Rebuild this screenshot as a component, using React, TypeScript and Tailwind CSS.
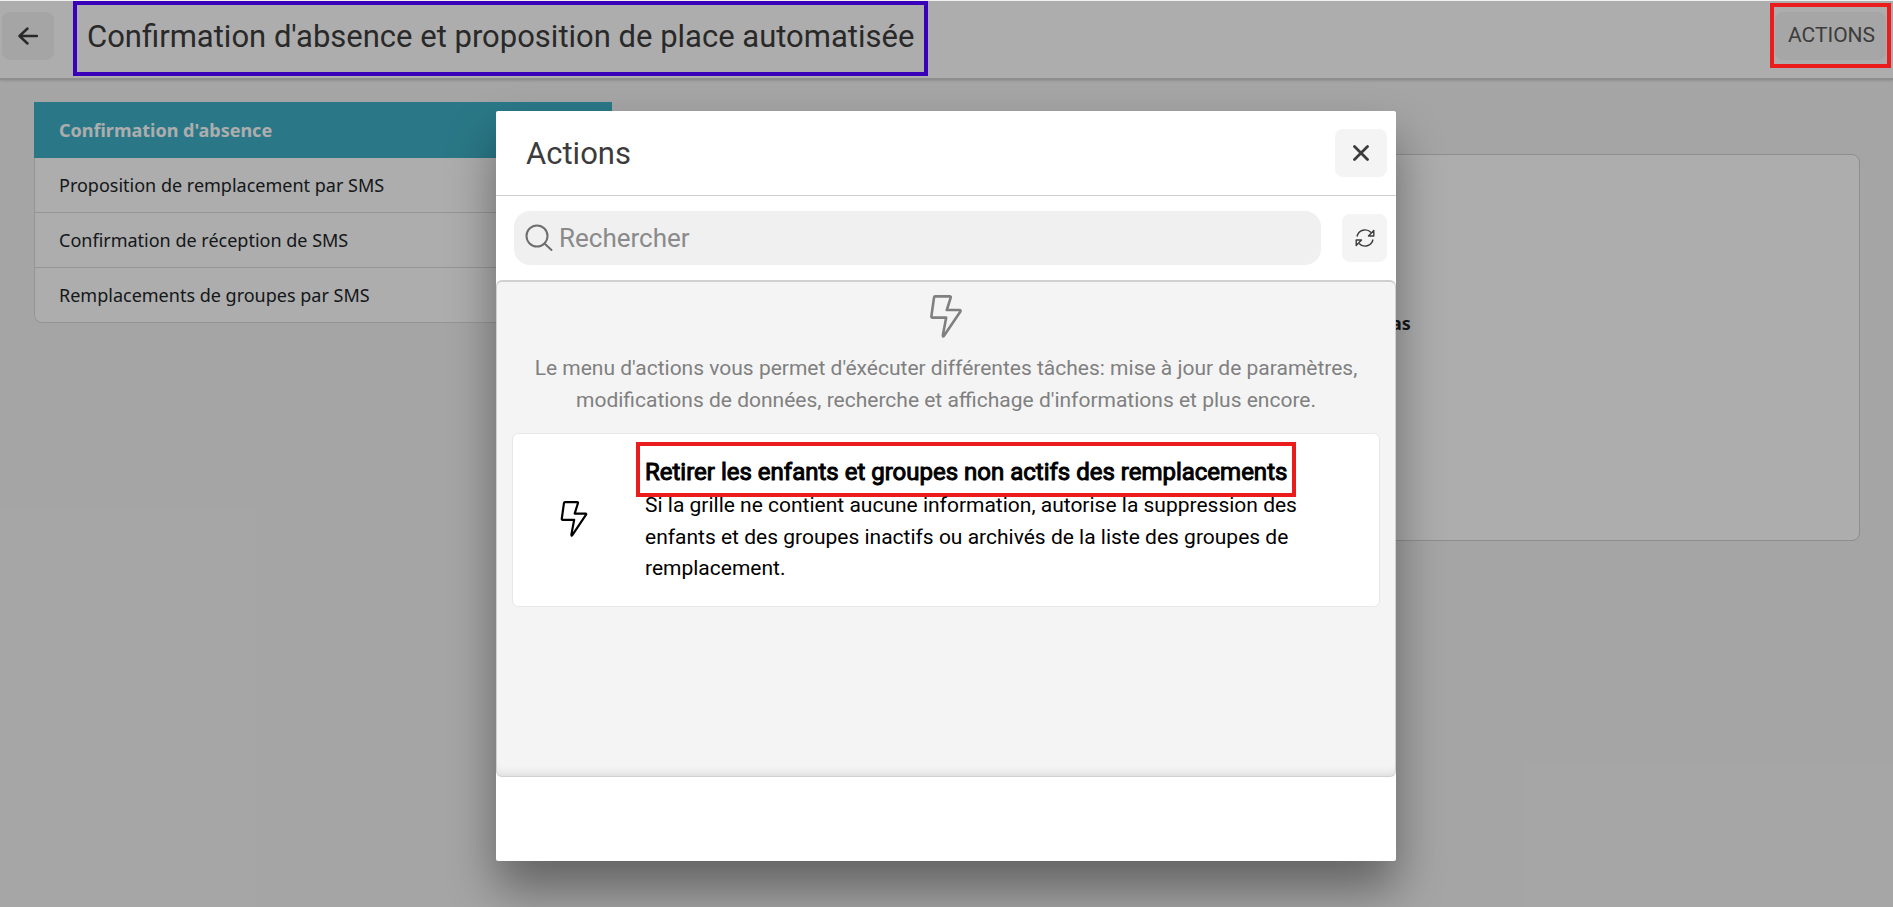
import React, { useState } from 'react';

const tabs = [
    "Confirmation d'absence",
    'Proposition de remplacement par SMS',
    'Confirmation de réception de SMS',
    'Remplacements de groupes par SMS',
];

const BoltIcon: React.FC<{ className?: string }> = ({ className }) => (
    <svg viewBox="0 0 32 43" className={className} fill="none" stroke="currentColor" strokeWidth="2.6" strokeLinecap="round" strokeLinejoin="round" aria-hidden="true">
        <path d="M5.2 1.4h14.500q1.400 0 1 1.300L16.800 15h13q1.200.2.600 1.400L14.200 40.500q-1.500 2.200-1.300-.6L16.200 22.600H2.500q-1.200 0-1.100-1.400L4 2.600q.2-1.200 1.200-1.200z" />
    </svg>
);

const SearchIcon: React.FC = () => (
    <svg viewBox="0 0 28 28" className="size-7 shrink-0 text-[#6e6e6e]" fill="none" stroke="currentColor" strokeWidth="2" strokeLinecap="round" aria-hidden="true">
        <circle cx="12" cy="12" r="10.5" />
        <path d="M19.500 19.500l7 6.500" />
    </svg>
);

const RefreshIcon: React.FC = () => (
    <svg viewBox="0 0 20 20" className="size-5" fill="none" stroke="currentColor" strokeWidth="1.4" strokeLinejoin="round" aria-hidden="true">
        <path d="M2 8.500A8.200 8.200 0 0 1 16 4.500" />
        <path d="M18 11.500A8.200 8.200 0 0 1 4 15.500" />
        <path d="M18.800 2.500v5.500h-5.300z" />
        <path d="M1.200 17.500V12h5.300z" />
    </svg>
);

const App: React.FC = () => {
    const [activeTab, setActiveTab] = useState(0);
    const [search, setSearch] = useState('');

    return (
        <div className="relative min-h-screen overflow-hidden bg-[#f4f4f4] pt-px font-['Roboto',sans-serif]">
            <header className="flex h-[79px] items-start border-b-2 border-[#d2d2d2] bg-white pl-0.5 shadow-sm">
                <button aria-label="Retour" className="mt-[11px] flex h-12 w-[52px] items-center justify-center rounded-lg bg-[#f4f4f4] text-[#3c3c3c]">
                    <svg viewBox="0 0 20 18" className="h-[18px] w-5" fill="none" stroke="currentColor" strokeWidth="2.4" strokeLinecap="round" strokeLinejoin="round" aria-hidden="true">
                        <path d="M9.500 1.500L1.500 9l8 7.500M2 9h17" />
                    </svg>
                </button>
            </header>

            <main className="flex items-start gap-[34px] px-[33px] pt-[22px] pl-[34px]">
                <nav className="w-[578px] shrink-0 font-['Noto_Sans',sans-serif] text-lg">
                    {tabs.map((tab, i) => (
                        <button
                            key={tab}
                            onClick={() => setActiveTab(i)}
                            className={i === activeTab
                                ? 'block h-14 w-full bg-[#3eb1c8] pl-[25px] text-left font-bold text-white'
                                : 'block h-[55px] w-full border-x border-b border-[#dcdcdc] bg-white pl-6 text-left text-[#212529] last:rounded-b-lg'}
                        >
                            {tab}
                        </button>
                    ))}
                </nav>
                <section className="mt-[52px] h-[387px] grow rounded-lg border border-[#d2d2d2] bg-white pt-[154px] pl-[744px] font-['Noto_Sans',sans-serif] text-lg font-bold text-[#212529]">
                    as
                </section>
            </main>

            <div className="absolute inset-x-0 top-px bottom-0 bg-black/32" />

            {/* highlighted title and button, above the backdrop */}
            <div className="absolute inset-x-0 top-px flex items-start justify-between pr-0.5 pl-[73px]">
                <h1 className="flex h-[75px] items-center border-4 border-[#3a00b9] px-2.5 pb-0.5 text-[31px] text-[#292929]">
                    Confirmation d'absence et proposition de place automatisée
                </h1>
                <div className="mt-0.5 flex h-[65px] w-[121px] border-4 border-[#ea1c1c] p-px pt-[5px]">
                    <button className="h-12 w-full rounded-lg bg-[#a6a6a6] pl-0.5 text-[21px] text-[#3c3c3c]">ACTIONS</button>
                </div>
            </div>

            <div className="absolute inset-x-0 top-[111px] flex justify-center pr-px">
                <div role="dialog" aria-labelledby="dialog-title" className="flex h-[750px] w-[900px] flex-col rounded-xs bg-white shadow-[0_28px_48px_rgba(0,0,0,0.4)]">
                    <div className="flex h-[85px] items-center justify-between border-b border-[#cfcfcf] pr-[9px] pl-[30px]">
                        <h2 id="dialog-title" className="pt-0.5 text-[31px] text-[#3c3c3c]">Actions</h2>
                        <button aria-label="Fermer" className="flex h-12 w-[52px] items-center justify-center rounded-lg bg-[#f4f4f4] text-[#3c3c3c]">
                            <svg viewBox="0 0 16 16" className="size-4" fill="none" stroke="currentColor" strokeWidth="2.8" strokeLinecap="round" aria-hidden="true">
                                <path d="M1.500 1.500l13 13M14.500 1.500l-13 13" />
                            </svg>
                        </button>
                    </div>

                    <div className="flex h-[84px] items-center gap-[21px] pr-[9px] pl-[18px]">
                        <label className="flex h-[54px] grow items-center gap-1.5 rounded-2xl bg-[#f0f0f0] pl-[11px]">
                            <SearchIcon />
                            <input
                                type="text"
                                aria-label="Rechercher"
                                placeholder="Rechercher"
                                value={search}
                                onChange={(e) => setSearch(e.target.value)}
                                className="w-full bg-transparent text-[26px] outline-none placeholder:text-[#8a8a8a]"
                            />
                        </label>
                        <button aria-label="Actualiser" className="flex h-12 w-[45px] items-center justify-center rounded-lg bg-[#f4f4f4] text-[#3c3c3c]">
                            <RefreshIcon />
                        </button>
                    </div>

                    <div className="grow rounded-md border border-t-2 border-[#d0d0d0] bg-[#f4f4f4] px-[15px] pt-[13px] shadow-[inset_0_-12px_12px_-12px_rgba(0,0,0,0.15)]">
                        <BoltIcon className="mx-auto h-[43px] w-8 text-[#808080]" />
                        <p className="mt-[15px] px-4 text-center text-[21px] leading-normal text-[#808080]">
                            Le menu d'actions vous permet d'éxécuter différentes tâches: mise à jour de paramètres, modifications de données, recherche et affichage d'informations et plus encore.
                        </p>
                        <div className="mt-[17px] flex h-[174px] items-start rounded-md border border-[#e8e8e8] bg-white pt-2 text-black">
                            <BoltIcon className="mt-[59px] ml-[47px] h-9 w-7" />
                            <div className="ml-12 w-[664px]">
                                <h3 className="flex h-[55px] w-[660px] items-center border-4 border-[#ea1c1c] px-[5px] pt-1 text-[24px] whitespace-nowrap [-webkit-text-stroke:1px_black]">
                                    Retirer les enfants et groupes non actifs des remplacements
                                </h3>
                                <p className="-mt-[7px] pl-[9px] text-[21px] leading-normal">
                                    Si la grille ne contient aucune information, autorise la suppression des enfants et des groupes inactifs ou archivés de la liste des groupes de remplacement.
                                </p>
                            </div>
                        </div>
                    </div>
                    <div className="h-[84px]" />
                </div>
            </div>
        </div>
    );
};

export default App;
